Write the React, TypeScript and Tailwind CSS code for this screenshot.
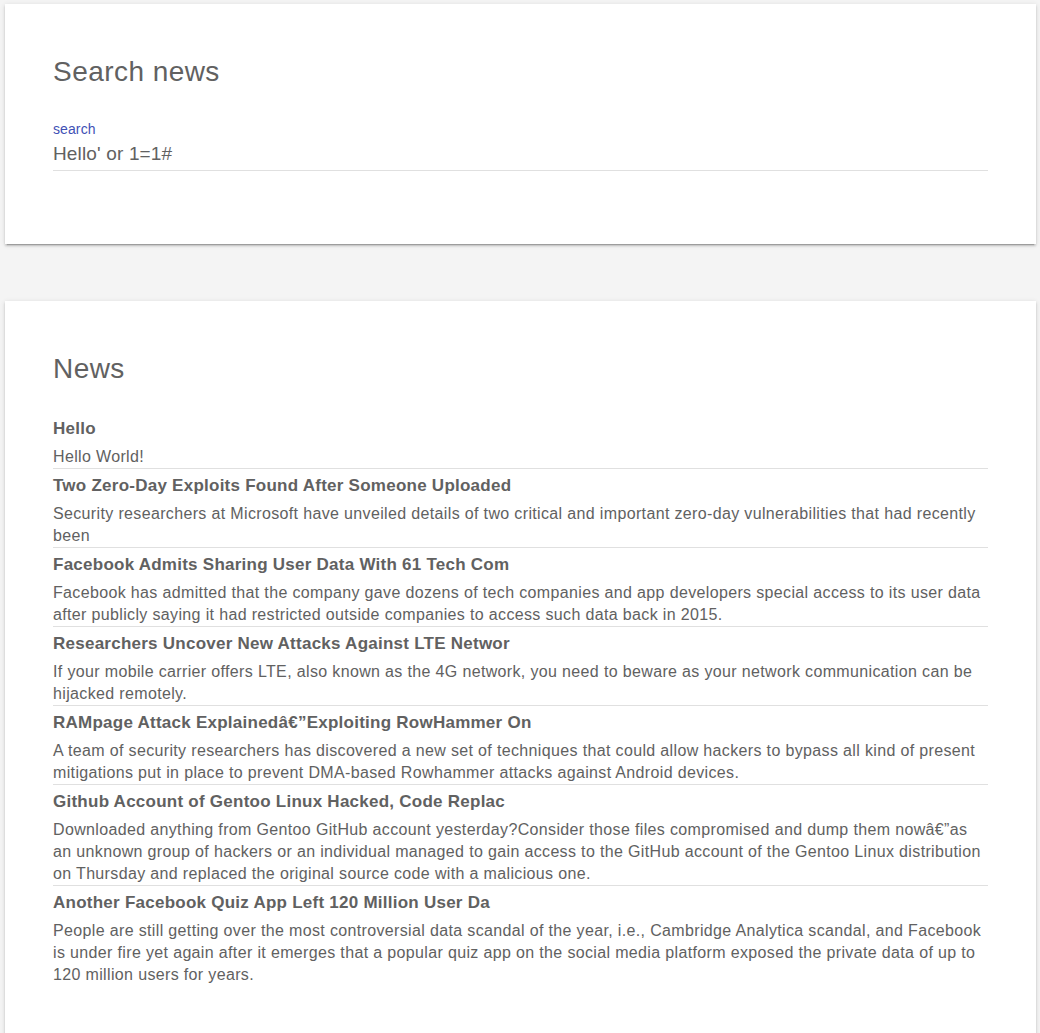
import React from 'react';

const news = [
  { title: 'Hello', body: 'Hello World!' },
  {
    title: 'Two Zero-Day Exploits Found After Someone Uploaded',
    body: 'Security researchers at Microsoft have unveiled details of two critical and important zero-day vulnerabilities that had recently been',
  },
  {
    title: 'Facebook Admits Sharing User Data With 61 Tech Com',
    body: 'Facebook has admitted that the company gave dozens of tech companies and app developers special access to its user data after publicly saying it had restricted outside companies to access such data back in 2015.',
  },
  {
    title: 'Researchers Uncover New Attacks Against LTE Networ',
    body: 'If your mobile carrier offers LTE, also known as the 4G network, you need to beware as your network communication can be hijacked remotely.',
  },
  {
    title: 'RAMpage Attack Explainedâ€”Exploiting RowHammer On',
    body: 'A team of security researchers has discovered a new set of techniques that could allow hackers to bypass all kind of present mitigations put in place to prevent DMA-based Rowhammer attacks against Android devices.',
  },
  {
    title: 'Github Account of Gentoo Linux Hacked, Code Replac',
    body: 'Downloaded anything from Gentoo GitHub account yesterday?Consider those files compromised and dump them nowâ€”as an unknown group of hackers or an individual managed to gain access to the GitHub account of the Gentoo Linux distribution on Thursday and replaced the original source code with a malicious one.',
  },
  {
    title: 'Another Facebook Quiz App Left 120 Million User Da',
    body: 'People are still getting over the most controversial data scandal of the year, i.e., Cambridge Analytica scandal, and Facebook is under fire yet again after it emerges that a popular quiz app on the social media platform exposed the private data of up to 120 million users for years.',
  },
];

const card =
  'bg-white ml-[5px] mr-[4px] shadow-[0_2px_2px_0_rgba(0,0,0,0.14),0_3px_1px_-2px_rgba(0,0,0,0.2),0_1px_5px_0_rgba(0,0,0,0.12)]';

export default function App() {
  return (
    <div className="min-h-[1033px] bg-[#f4f4f4] pt-[4px] font-['Liberation_Sans',Arial,sans-serif] text-[#616161]">
      <div className={`${card} px-12 pt-[49px] pb-[73px]`}>
        <h1 className="text-[28px] leading-[38px] tracking-[0.45px]">Search news</h1>
        <div className="mt-[30px]">
          <label className="block text-[14px] leading-[17px] tracking-[0.1px] text-[#3f51b5]">search</label>
          <input
            readOnly
            value="Hello' or 1=1#"
            className="block w-full border-b border-[#e0e0e0] bg-transparent pt-[4px] pb-[4px] text-[19px] leading-[24px] tracking-[0.15px] text-[#616161] outline-none"
          />
        </div>
      </div>

      <div className={`${card} mt-[57px] px-12 pt-[49px] pb-[60px]`}>
        <h2 className="text-[28px] leading-[38px] tracking-[0.45px]">News</h2>
        <div className="mt-[24px]">
          {news.map((n, i) => (
            <div
              key={i}
              className={i < news.length - 1 ? 'border-b border-[#e0e0e0]' : ''}
            >
              <h3 className="pt-[6px] text-[17px] font-bold leading-[22px] tracking-[0.25px]">{n.title}</h3>
              <p className="mt-[6px] text-[16px] leading-[22px] tracking-[0.35px]">{n.body}</p>
            </div>
          ))}
        </div>
      </div>
    </div>
  );
}
